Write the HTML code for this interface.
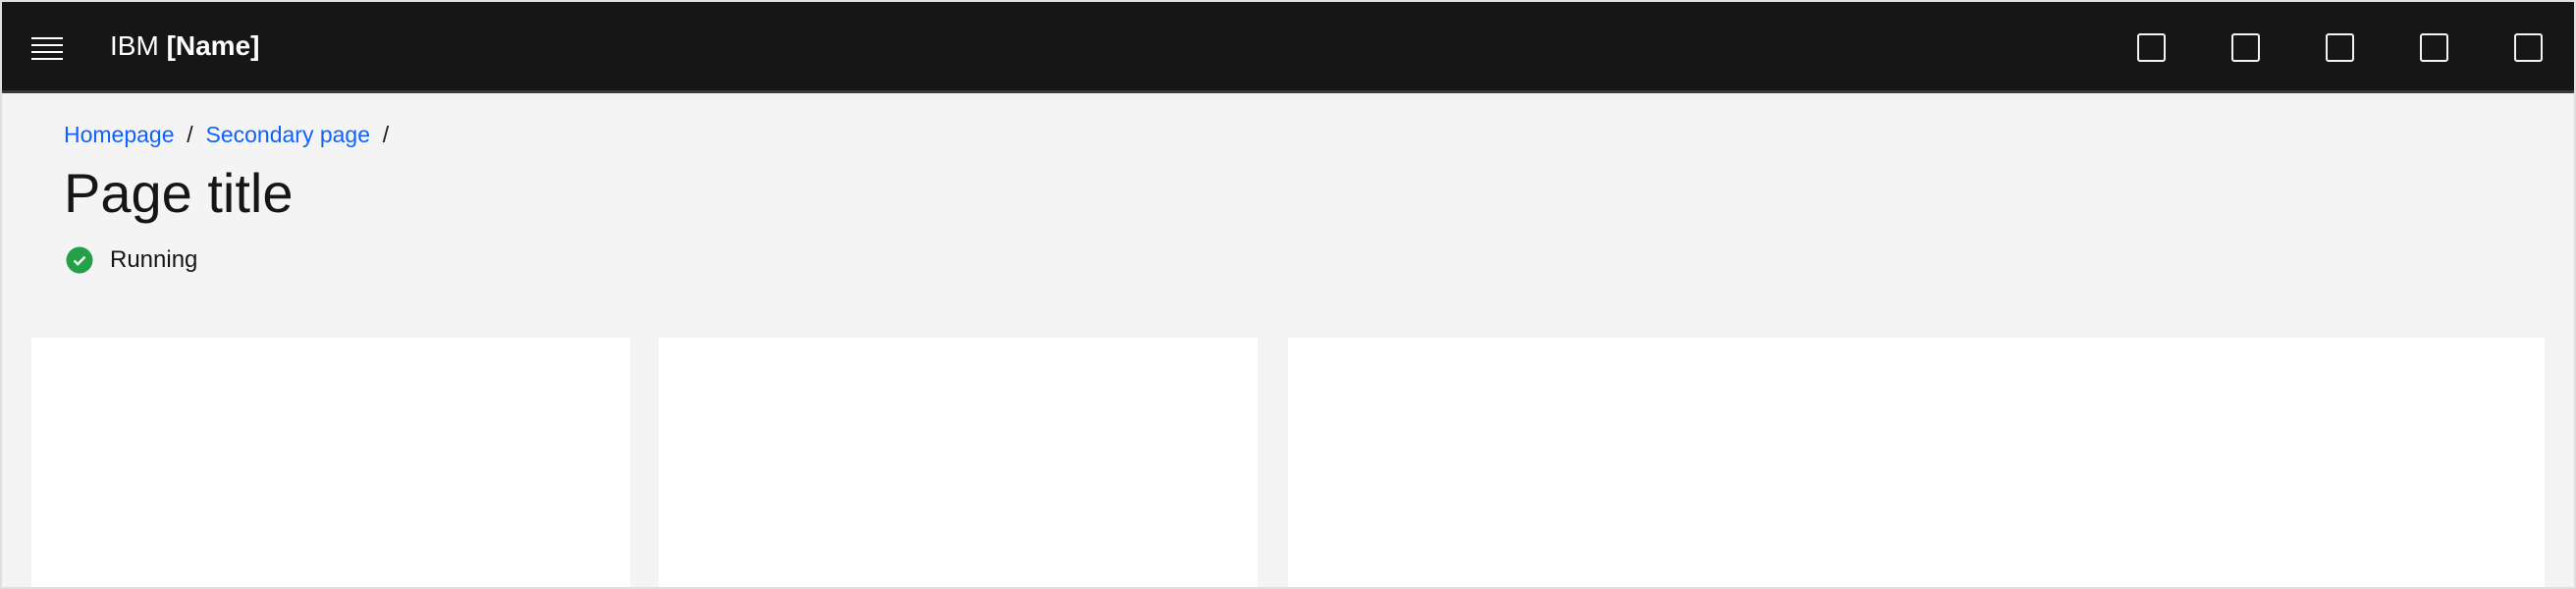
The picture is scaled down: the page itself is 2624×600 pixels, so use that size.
<!DOCTYPE html>
<html><head><meta charset="utf-8"><style>
*{margin:0;padding:0;box-sizing:border-box}
body{width:2624px;height:600px;overflow:hidden;background:#f4f4f4;font-family:"Liberation Sans",sans-serif;position:relative;border:2px solid #e0e0e0}
.hdr{position:absolute;left:0;top:0;width:2620px;height:93px;background:#161616;border-bottom:3px solid #393939}
.abs{position:absolute}
.sq{position:absolute;top:32px;width:29px;height:29px;border:2.5px solid #f4f4f4;border-radius:3px}
.card{position:absolute;top:342px;height:254px;background:#fff}
</style></head><body>
<div class="hdr">
 <svg class="abs" style="left:30px;top:34px" width="34" height="28" viewBox="0 0 34 28"><g fill="#fff"><rect x="0" y="2" width="32" height="2"/><rect x="0" y="9" width="32" height="2"/><rect x="0" y="16" width="32" height="2"/><rect x="0" y="23" width="32" height="2"/></g></svg>
 <div class="abs" style="left:110px;top:28px;font-size:28px;color:#fff;line-height:34px">IBM <b>[Name]</b></div>
 <div class="sq" style="left:2175px"></div>
 <div class="sq" style="left:2271px"></div>
 <div class="sq" style="left:2367px"></div>
 <div class="sq" style="left:2463px"></div>
 <div class="sq" style="left:2559px"></div>
</div>
<div class="abs" style="left:63px;top:120px;font-size:23px;line-height:30px;color:#161616"><span style="color:#0f62fe">Homepage</span>&nbsp; / &nbsp;<span style="color:#0f62fe">Secondary page</span>&nbsp; /</div>
<div class="abs" style="left:63px;top:160px;font-size:56px;line-height:70px;color:#161616">Page title</div>
<svg class="abs" style="left:65px;top:249px" width="28" height="28" viewBox="0 0 28 28"><circle cx="14" cy="14" r="13.5" fill="#24a148"/><path d="M8.5 14.5l3.8 3.6 7.2-7.4" stroke="#fff" stroke-width="2.4" fill="none"/></svg>
<div class="abs" style="left:110px;top:248px;font-size:24px;line-height:30px;color:#161616">Running</div>
<div class="card" style="left:30px;width:610px"></div>
<div class="card" style="left:669px;width:610px"></div>
<div class="card" style="left:1310px;width:1280px"></div>
</body></html>
